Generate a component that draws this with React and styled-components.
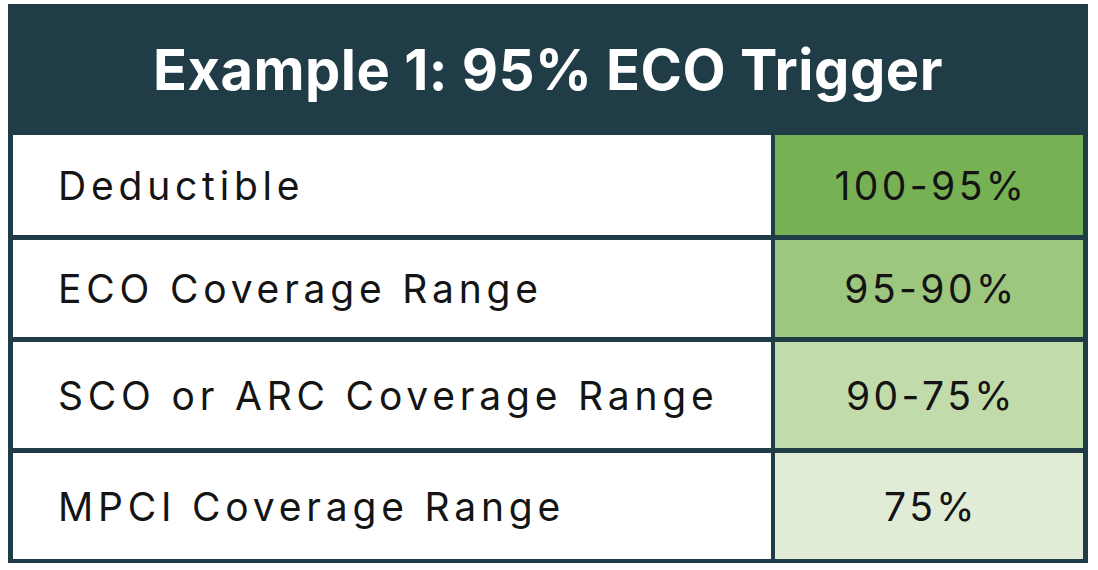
import React from "react";
import styled, { createGlobalStyle } from "styled-components";

const GlobalStyle = createGlobalStyle`
  body {
    margin: 0;
    background: #ffffff;
    font-family: Inter, Lato, sans-serif;
  }
`;

const Frame = styled.div`
  margin: 4px 0 0 8px;
  width: 1080px;
  background: #1f3c47;
  padding-bottom: 4px;
`;

const Title = styled.h1`
  margin: 0;
  height: 131px;
  display: flex;
  align-items: center;
  justify-content: center;
  color: #ffffff;
  font-size: 56px;
  font-weight: 700;
  letter-spacing: 0.5px;
`;

const Grid = styled.div`
  display: grid;
  grid-template-columns: 758px 308px;
  column-gap: 4px;
  row-gap: 5px;
  padding: 0 5px;
`;

const LabelCell = styled.div`
  height: ${(p) => p.$h}px;
  background: #ffffff;
  display: flex;
  align-items: center;
  padding-left: 45px;
  color: #141414;
  font-size: 39px;
  letter-spacing: 4.8px;
`;

const ValueCell = styled.div`
  height: ${(p) => p.$h}px;
  background: ${(p) => p.$bg};
  display: flex;
  align-items: center;
  justify-content: center;
  padding-left: 4px;
  color: #141414;
  font-size: 39px;
  letter-spacing: 3.4px;
`;

const rows = [
  { label: "Deductible", value: "100-95%", bg: "#76b254", h: 100 },
  { label: "ECO Coverage Range", value: "95-90%", bg: "#9dc67f", h: 97 },
  { label: "SCO or ARC Coverage Range", value: "90-75%", bg: "#c1dbaa", h: 106 },
  { label: "MPCI Coverage Range", value: "75%", bg: "#e1ecd7", h: 106 },
];

export default function App() {
  return (
    <>
      <GlobalStyle />
      <Frame>
        <Title>Example 1: 95% ECO Trigger</Title>
        <Grid>
          {rows.map((r) => (
            <React.Fragment key={r.label}>
              <LabelCell $h={r.h}>{r.label}</LabelCell>
              <ValueCell $h={r.h} $bg={r.bg}>
                {r.value}
              </ValueCell>
            </React.Fragment>
          ))}
        </Grid>
      </Frame>
    </>
  );
}
